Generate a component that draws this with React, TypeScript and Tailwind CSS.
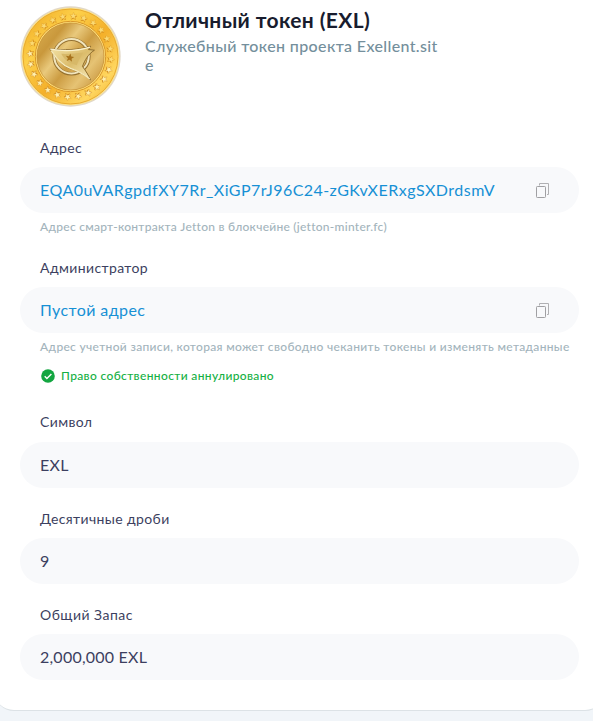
import type { ReactNode } from "react";

const STAR =
  "M0-10 2.6-3.4 9.5-3.1 4.1 1.3 5.9 8.1 0 4.3-5.9 8.1-4.1 1.3-9.5-3.1-2.6-3.4Z";

function Coin() {
  const stars = Array.from({ length: 24 }, (_, i) => i * 15 + 4);
  return (
    <svg className="h-[101px] w-[101px] shrink-0" viewBox="13 17 304 304" aria-label="EXL">
      <defs>
        <linearGradient id="rim" x1="0" y1="0" x2="1" y2="1">
          <stop offset="0" stopColor="#eda31b" />
          <stop offset=".3" stopColor="#fdd04a" />
          <stop offset=".55" stopColor="#f4b02a" />
          <stop offset=".8" stopColor="#ffd760" />
          <stop offset="1" stopColor="#eba422" />
        </linearGradient>
        <linearGradient id="face" x1="0" y1=".1" x2="1" y2=".9">
          <stop offset="0" stopColor="#d9ac4e" />
          <stop offset=".22" stopColor="#c9983c" />
          <stop offset=".38" stopColor="#e9c97c" />
          <stop offset=".55" stopColor="#cc9c42" />
          <stop offset=".75" stopColor="#e6c374" />
          <stop offset="1" stopColor="#c48f36" />
        </linearGradient>
        <linearGradient id="wing" x1="0" y1="0" x2="1" y2="1">
          <stop offset="0" stopColor="#f3e3a9" />
          <stop offset=".5" stopColor="#dcbd6c" />
          <stop offset="1" stopColor="#f8edc0" />
        </linearGradient>
      </defs>
      <circle cx="165" cy="169" r="151" fill="#e2d8c6" />
      <circle cx="165" cy="169" r="147" fill="#fbe28a" />
      <circle cx="165" cy="169" r="143" fill="url(#rim)" stroke="#e8aa30" strokeWidth="3" />
      <circle cx="165" cy="169" r="106" fill="#ffe27c" stroke="#d8962a" strokeWidth="3" />
      <circle cx="165" cy="169" r="101" fill="url(#face)" stroke="#bf872d" strokeWidth="2" />
      {stars.map((a) => (
        <g key={a} transform={`translate(165 169) rotate(${a}) translate(0 -122) scale(1.15)`}>
          <path d={STAR} transform="translate(1 2)" fill="#cc8417" />
          <path
            d={STAR}
            fill={a > 100 && a < 275 ? "#fff0ae" : "#fbda74"}
            stroke={a > 100 && a < 275 ? "#d8952a" : "#e5a527"}
            strokeWidth="1"
          />
        </g>
      ))}
      <circle cx="168" cy="169" r="52" fill="none" stroke="#94702f" strokeWidth="11" />
      <circle cx="168" cy="168" r="52" fill="none" stroke="#f1e5bd" strokeWidth="6" />
      <path
        d="M103 146C143 151 191 149 226 138L219 148L237 150C218 162 208 180 201 199C211 212 219 225 225 239C205 222 186 212 165 206C137 196 121 173 103 146Z"
        fill="url(#wing)"
        stroke="#8c6a2c"
        strokeWidth="3"
      />
      <path d="M137 161C158 162 183 160 204 157C194 171 188 184 184 195C164 192 148 181 137 161Z" fill="#d7b868" />
      <path d="M104 147C143 154 191 151 224 141" fill="none" stroke="#fbf2cd" strokeWidth="4" />
      <path d="M223 237C205 222 186 212 165 205C138 195 122 173 107 151" fill="none" stroke="#f6eabb" strokeWidth="4" />
      <path d={STAR} transform="translate(163 173) rotate(8) scale(1.35)" fill="#a8721c" />
    </svg>
  );
}

function CopyIcon() {
  return (
    <svg className="h-[15px] w-[13px]" viewBox="0 0 13 15" fill="none">
      <path d="M3.5 2.5V.5H12.5V11.5H11" stroke="#b0b0b3" />
      <rect x=".5" y="3.5" width="9" height="11" rx=".8" stroke="#a0a0a3" />
    </svg>
  );
}

function Label({ children }: { children: ReactNode }) {
  return <div className="h-5 pl-5 text-[14px] leading-5 tracking-[0.38px] text-[#3c3f60]">{children}</div>;
}

function Pill({ children, copy = false }: { children: ReactNode; copy?: boolean }) {
  return (
    <div className="flex h-[46px] items-center justify-between rounded-full bg-[#f8f9fb] pr-[30px] pl-5 text-[16px] leading-6">
      {children}
      {copy && (
        <button type="button">
          <CopyIcon />
        </button>
      )}
    </div>
  );
}

export default function App() {
  return (
    <div className="h-[721px] w-[593px] overflow-hidden bg-[#f1f5f9] font-['Lato','Noto_Sans',sans-serif] whitespace-nowrap">
      <main className="-mr-[12px] -ml-[6px] h-[711px] rounded-b-[20px] border-b border-[#dce2e6] bg-white pl-[26px]">
        <header className="flex h-[138px] gap-6 pt-[6px]">
          <Coin />
          <div className="pt-[2px]">
            <h1 className="text-[21px] leading-6 font-bold tracking-[0.36px] text-[#181c2e]">
              Отличный токен (EXL)
            </h1>
            <p className="pt-[4px] text-[16px] leading-[19px] font-medium text-[#748f9c]">
              <span className="tracking-[0.36px]">Служебный токен проекта Exellent.sit</span>
              <br />e
            </p>
          </div>
        </header>

        <div className="w-[559px]">
          <section className="h-[120px]">
            <Label>Адрес</Label>
            <div className="pt-[9px]">
              <Pill copy><a className="tracking-[0.48px] text-[#1690d5]">EQA0uVARgpdfXY7Rr_XiGP7rJ96C24-zGKvXERxgSXDrdsmV</a></Pill>
            </div>
            <p className="pt-[6px] pl-5 text-[12px] leading-4 font-medium tracking-[0.26px] text-[#a3b4bc]">
              Адрес смарт-контракта Jetton в блокчейне (jetton-minter.fc)
            </p>
          </section>

          <section className="h-[154px]">
            <Label>Администратор</Label>
            <div className="pt-[9px]">
              <Pill copy><a className="tracking-[0.42px] text-[#1690d5]">Пустой адрес</a></Pill>
            </div>
            <p className="pt-[6px] pl-5 text-[12px] leading-4 font-medium tracking-[0.32px] text-[#a3b4bc]">
              Адрес учетной записи, которая может свободно чеканить токены и изменять метаданные
            </p>
            <p className="flex items-center gap-[6px] pt-[13px] pl-[21px] text-[12px] leading-4 font-medium tracking-[0.36px] text-[#15b044]">
              <svg className="h-[14px] w-[14px]" viewBox="0 0 14 14">
                <circle cx="7" cy="7" r="6.8" fill="#13a641" />
                <path d="m3.7 7.2 2.2 2.2 4.5-4.5" fill="none" stroke="#fff" strokeWidth="1.4" />
              </svg>
              Право собственности аннулировано
            </p>
          </section>

          <section className="h-[97px]">
            <Label>Символ</Label>
            <div className="pt-[10px]">
              <Pill><span className="tracking-[0.3px] text-[#3c3f60]">EXL</span></Pill>
            </div>
          </section>

          <section className="h-[96px]">
            <Label>Десятичные дроби</Label>
            <div className="pt-[9px]">
              <Pill><span className="text-[#3c3f60]">9</span></Pill>
            </div>
          </section>

          <section>
            <Label><span className="tracking-[0.48px]">Общий Запас</span></Label>
            <div className="pt-[9px]">
              <Pill><span className="tracking-[0.23px] text-[#3c3f60]">2,000,000 EXL</span></Pill>
            </div>
          </section>
        </div>
      </main>
    </div>
  );
}
